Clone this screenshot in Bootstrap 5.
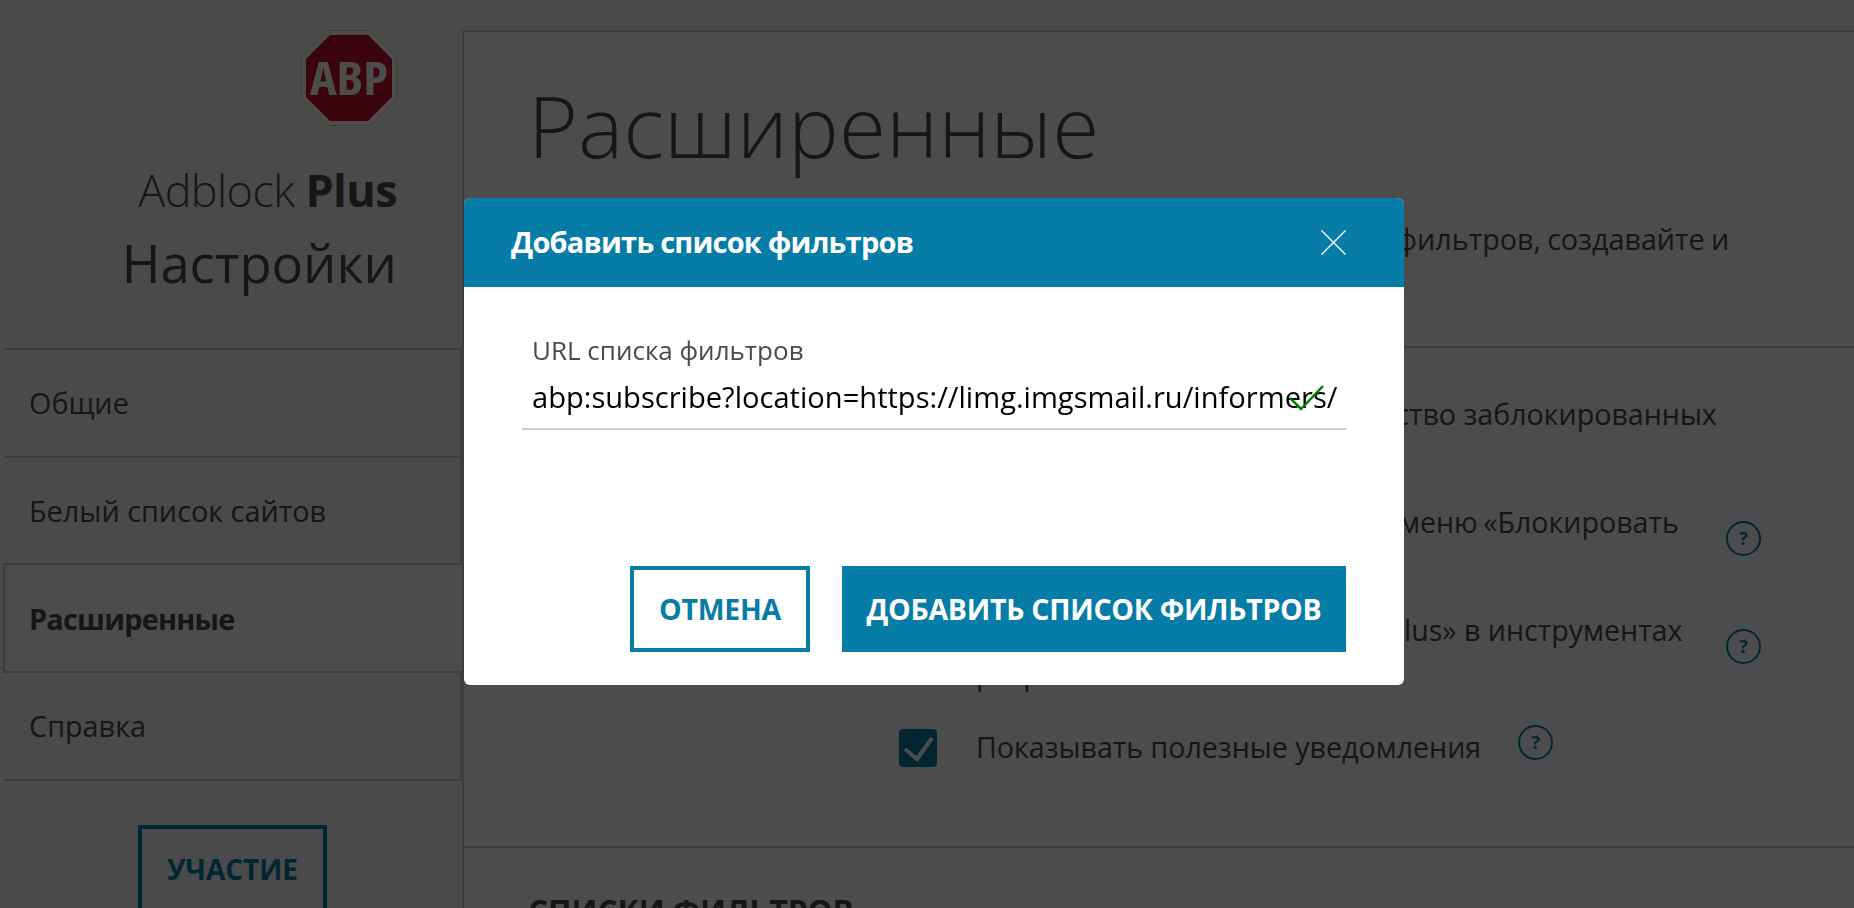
<!DOCTYPE html>
<html lang="ru"><head><meta charset="utf-8"><title>Adblock Plus</title>
<link href="https://cdn.jsdelivr.net/npm/bootstrap@5.3.0/dist/css/bootstrap.min.css" rel="stylesheet">
<style>
html,body{height:908px;overflow:hidden}
body{font-family:"Open Sans","Noto Sans",sans-serif;color:#4a4a4a;background:#f7f7f7;font-stretch:100%}
.side-col{width:462px;flex:none;padding-left:3px}
.brand-area{height:348px;padding:30px 65px 0 0;text-align:right}
.brand-logo{display:block;margin-left:auto;width:96px;height:96px}
.brand-name{font-size:45px;font-weight:300;line-height:56px;margin-top:36px;letter-spacing:-.6px;white-space:nowrap}
.brand-name b{font-weight:700}
.brand-title{font-size:52.5px;line-height:70px;margin:10px 0 0;color:#4a4a4a;white-space:nowrap}
.side-nav{list-style:none;margin:0;padding:0;border-top:2px solid #cdcdcd}
.side-nav li{height:107.7px;padding-left:26px;font-size:28.8px;display:flex;align-items:center;border-bottom:2px solid #cdcdcd;border-right:2px solid #cdcdcd}
.side-nav li.on{font-weight:700;letter-spacing:-.75px;background:#fff;border-left:2px solid #cdcdcd;padding-left:24px;border-right:0}
.join-btn{display:block;width:189px;height:110px;margin:44px 0 0 135px;border:4px solid #077ca6;border-radius:0;color:#077ca6;font-size:28px;font-weight:700;padding-top:19px;text-align:center}
.main-col{flex:1;margin-top:30px;background:#fff;border-top:2px solid #cdcdcd;border-left:2px solid #cdcdcd}
.sect-a{height:316px;padding:0 64px;border-bottom:2px solid #cdcdcd;overflow:hidden}
.sect-a h1{font-size:85.5px;font-weight:300;line-height:130px;margin:28px 0 0}
.sect-a p{font-size:28.7px;line-height:44px;margin:27px 0 0 1px;white-space:nowrap;word-spacing:-1.2px}
.sect-b{height:500px;padding:44px 0 0 435px;border-bottom:2px solid #cdcdcd}
.opt-row{display:flex;gap:39px;font-size:28.6px;line-height:44px;white-space:nowrap;margin-bottom:20px}
.opt-row.wide-gap{margin-bottom:29px}
.opt-text{width:711px}
.opt-text.tight-words{word-spacing:-2px}
.opt-box{display:block;width:38px;height:38px;flex:none;border-radius:4px;background:#077ca6;margin-top:4px}
.opt-box svg{display:block}
.help-dot{width:35px;height:35px;flex:none;border:2px solid #077ca6;border-radius:50%;color:#077ca6;font-size:18px;font-weight:700;line-height:30px;text-align:center}
.help-low{margin-top:21px}
.help-near{margin-left:-2px}
.sect-c{padding:39px 64px;font-size:31.5px;font-weight:700}
.dlg-dialog{max-width:none;width:940px;margin:198px 0 0 464px}
.dlg-content{border:0;border-radius:6px;height:487px;overflow:hidden;color:#4a4a4a}
.dlg-head{height:89px;background:#077ca6;color:#fff;border:0;border-radius:0;padding:0 58px 0 47px}
.dlg-head h2{font-size:29px;font-weight:700;margin:0;color:#fff;letter-spacing:-.78px}
.dlg-body{padding:43px 58px 0;flex:none}
.dlg-field{position:relative;width:824px;border-bottom:2px solid #ccc;padding:0 0 7px 10px}
.dlg-field label{display:block;font-size:26px;line-height:40px;color:#4a4a4a}
.dlg-url{font-size:29.1px;line-height:48px;margin-top:3px;color:#000;white-space:nowrap}
.dlg-ok{position:absolute;right:21px;top:55px}
.dlg-foot{margin-top:auto;padding:0 58px 33px;border:0;gap:32px}
.dlg-foot>*{margin:0}
.btn-line,.btn-full{height:86px;border-radius:0;font-size:28.5px;letter-spacing:-.25px;font-weight:700;text-transform:uppercase;display:flex;align-items:center;justify-content:center;border:4px solid #077ca6;white-space:nowrap;padding:0}
.btn-line{width:180px;background:#fff;color:#077ca6}
.btn-full{width:504px;background:#077ca6;color:#fff}
</style></head>
<body>
<div class="d-flex">
  <aside class="side-col">
    <div class="brand-area">
      <svg class="brand-logo" viewBox="0 0 96 96" role="img" aria-label="ABP"><polygon points="27,.5 69,.5 95.5,27 95.5,69 69,95.5 27,95.5 .5,69 .5,27" fill="#fff" stroke="#d8d8d8"/><polygon points="29,5 67,5 91,29 91,67 67,91 29,91 5,67 5,29" fill="#c70d2c"/><text x="48" y="65" text-anchor="middle" font-family="Open Sans" font-weight="700" font-size="46" textLength="78" lengthAdjust="spacingAndGlyphs" style="font-stretch:75%" fill="#fff">ABP</text></svg>
      <div class="brand-name">Adblock <b>Plus</b></div>
      <h2 class="brand-title">Настройки</h2>
    </div>
    <ul class="side-nav">
      <li>Общие</li><li>Белый список сайтов</li><li class="on">Расширенные</li><li>Справка</li>
    </ul>
    <a class="join-btn text-decoration-none">УЧАСТИЕ</a>
  </aside>
  <main class="main-col">
    <section class="sect-a">
      <h1>Расширенные</h1>
      <p>Настройте работу Adblock Plus, добавляйте и удаляйте списки фильтров, создавайте и<br>изменяйте собственные фильтры.</p>
    </section>
    <section class="sect-b">
      <div class="opt-row"><span class="opt-box"></span><span class="opt-text">Показывать на значке количество заблокированных<br>рекламных объявлений</span></div>
      <div class="opt-row"><span class="opt-box"></span><span class="opt-text tight-words">Показать пункт в контекстном меню «Блокировать<br>элемент»</span><span class="help-dot help-low">?</span></div>
      <div class="opt-row wide-gap"><span class="opt-box"></span><span class="opt-text">Показывать панель «Adblock Plus» в инструментах<br>разработчика</span><span class="help-dot help-low">?</span></div>
      <div class="opt-row"><span class="opt-box"><svg width="38" height="38" viewBox="0 0 38 38"><path d="M6 20l12 10L33 9" fill="none" stroke="#fff" stroke-width="4"/></svg></span><span>Показывать полезные уведомления</span><span class="help-dot help-near">?</span></div>
    </section>
    <section class="sect-c">СПИСКИ ФИЛЬТРОВ</section>
  </main>
</div>
<div class="modal-backdrop show" style="opacity:.7"></div>
<div class="modal d-block" tabindex="-1">
  <div class="modal-dialog dlg-dialog">
    <div class="modal-content dlg-content">
      <div class="modal-header dlg-head">
        <h2>Добавить список фильтров</h2>
        <svg class="ms-auto" width="25" height="25" viewBox="0 0 25 25" role="img" aria-label="Закрыть"><path d="M.5.5l24 24M24.500.5l-24 24" stroke="#fff" stroke-width="1.4" fill="none"/></svg>
      </div>
      <div class="modal-body dlg-body">
        <div class="dlg-field">
          <label>URL списка фильтров</label>
          <div class="dlg-url">abp:subscribe?location=https://limg.imgsmail.ru/informers/</div>
          <svg class="dlg-ok" width="36" height="26" viewBox="0 0 36 26"><path d="M1 13l11 11L34 1" fill="none" stroke="#008000" stroke-width="2.5"/></svg>
        </div>
      </div>
      <div class="modal-footer dlg-foot">
        <button class="btn btn-line">Отмена</button>
        <button class="btn btn-full">Добавить список фильтров</button>
      </div>
    </div>
  </div>
</div>
<script src="https://cdn.jsdelivr.net/npm/bootstrap@5.3.0/dist/js/bootstrap.bundle.min.js"></script>
</body></html>
